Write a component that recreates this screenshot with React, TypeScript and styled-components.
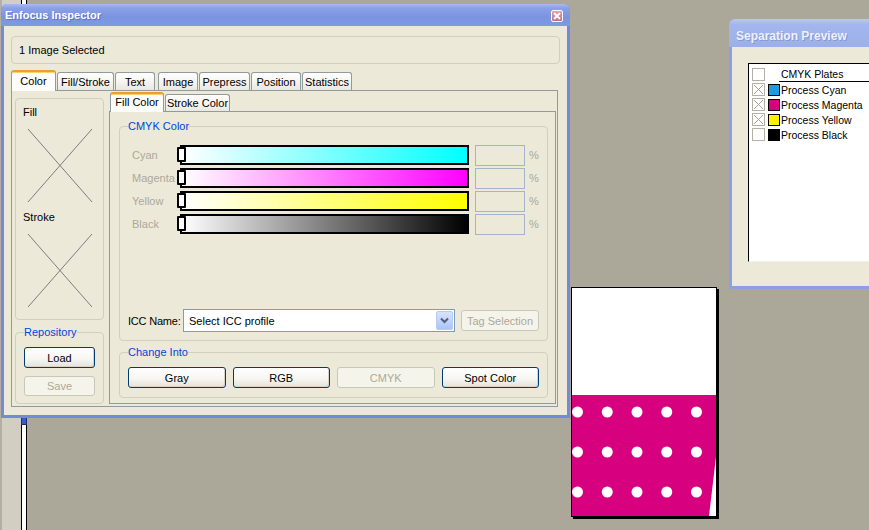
import styled, { createGlobalStyle } from 'styled-components';

const GlobalStyle = createGlobalStyle`
  html, body { margin: 0; padding: 0; }
  body {
    font-family: "Liberation Sans", Arial, sans-serif;
    font-size: 11px;
    color: #000;
  }
  * { box-sizing: border-box; }
`;

const Desktop = styled.div`
  position: relative;
  width: 869px;
  height: 530px;
  overflow: hidden;
  background: #aca899;
  display: flex;
`;

const SideStrip = styled.div`
  width: 21px;
  background: #d2cfc2;
  box-shadow: inset 2px 0 0 #b3b0a3;
`;

const RulerBar = styled.div`
  position: relative;
  width: 6px;
  background: #fff;
  border-left: 1px solid #000;
  border-right: 1px solid #000;

  &::before {
    content: '';
    position: absolute;
    left: -1px;
    right: -1px;
    top: 414px;
    height: 9px;
    background: #3a5cc4;
    border: 1px solid #1b2f70;
  }
`;

const Frame = styled.div<{ $left: number; $top: number; $width: number; $height: number; $inactive?: boolean }>`
  position: absolute;
  left: ${(p) => p.$left}px;
  top: ${(p) => p.$top}px;
  width: ${(p) => p.$width}px;
  height: ${(p) => p.$height}px;
  display: flex;
  flex-direction: column;
  padding: 0 3px 3px;
  border-radius: 6px 6px 0 0;
  background: ${(p) => (p.$inactive ? '#8c9fe4' : '#7489dc')};
`;

const TitleBar = styled.div<{ $inactive?: boolean; $h: number; $size: number }>`
  height: ${(p) => p.$h}px;
  margin: 0 -3px;
  padding: ${(p) => (p.$inactive ? '5px 7px 0 7px' : '0 7px 0 4px')};
  display: flex;
  align-items: center;
  justify-content: space-between;
  border-radius: 6px 6px 0 0;
  font-size: ${(p) => p.$size}px;
  font-weight: bold;
  color: ${(p) => (p.$inactive ? '#eef1fb' : '#fff')};
  text-shadow: 1px 1px 0 ${(p) => (p.$inactive ? '#8596d0' : '#5d72c4')};
  background: ${(p) =>
    p.$inactive
      ? 'linear-gradient(180deg, #b9c7f2 0%, #a3b6ee 20%, #9bb0ea 100%)'
      : 'linear-gradient(180deg, #a9baf0 0%, #8aa1e6 18%, #7b94e0 60%, #7f98e2 100%)'};
`;

const CloseBox = styled.div`
  width: 12px;
  height: 12px;
  margin-top: 1px;
  border: 1px solid #fff;
  border-radius: 2px;
  background: linear-gradient(180deg, #e0a0b2, #c06e88);
  display: flex;
  align-items: center;
  justify-content: center;
`;

const WindowBody = styled.div<{ $pad: string }>`
  flex: 1;
  min-height: 0;
  background: #ece9d8;
  display: flex;
  flex-direction: column;
  padding: ${(p) => p.$pad};
`;

const InfoBox = styled.div`
  height: 28px;
  border: 1px solid #d0d0bf;
  border-radius: 4px;
  padding-left: 7px;
  display: flex;
  align-items: center;
`;

const TabStrip = styled.div<{ $h: number; $top?: number; $left?: number }>`
  position: relative;
  z-index: 1;
  height: ${(p) => p.$h}px;
  margin-top: ${(p) => p.$top ?? 0}px;
  padding-left: ${(p) => p.$left ?? 0}px;
  display: flex;
  align-items: flex-end;
`;

const Tab = styled.div<{ $w: number; $h: number; $active?: boolean; $mr: number }>`
  width: ${(p) => p.$w}px;
  height: ${(p) => (p.$active ? p.$h + 1 : p.$h - 2)}px;
  margin-right: ${(p) => p.$mr}px;
  margin-bottom: ${(p) => (p.$active ? -1 : 0)}px;
  display: flex;
  align-items: center;
  justify-content: center;
  white-space: nowrap;
  border: 1px solid #919b9c;
  border-bottom: none;
  border-radius: 3px 3px 0 0;
  ${(p) =>
    p.$active
      ? `border-top: 2px solid #e99f35;
         box-shadow: inset 0 1px 0 #ffd06a;
         background: #fcfcfb;
         padding-bottom: 2px;`
      : `background: linear-gradient(180deg, #fefefe 0%, #f6f5f1 50%, #e8e7e0 100%);`}
`;

const TabPanel = styled.div`
  flex: 1;
  min-height: 0;
  margin-right: 2px;
  border: 1px solid #919b9c;
  display: flex;
  gap: 5px;
  padding: 0 1px 2px 3px;
`;

const LeftColumn = styled.div`
  width: 89px;
  margin-top: 7px;
  display: flex;
  flex-direction: column;
`;

const PreviewBox = styled.div`
  height: 222px;
  border: 1px solid #d0d0bf;
  border-radius: 4px;
  padding: 7px 0 0 7px;
`;

const PreviewLabel = styled.div<{ $gap?: number }>`
  line-height: 13px;
  margin-top: ${(p) => p.$gap ?? 0}px;
`;

const NoColor = styled.svg`
  display: block;
  margin: 9px 0 0 4px;
`;

const Group = styled.fieldset<{ $pad: string; $grow?: boolean; $h?: number; $mt?: number }>`
  margin: ${(p) => p.$mt ?? 0}px 0 0;
  min-width: 0;
  border: 1px solid #d0d0bf;
  border-radius: 4px;
  padding: ${(p) => p.$pad};
  ${(p) => (p.$grow ? 'flex: 1; min-height: 0;' : '')}
  ${(p) => (p.$h ? `height: ${p.$h}px; flex: none;` : '')}
  display: flex;
  flex-direction: column;
`;

const Legend = styled.legend`
  padding: 0;
  line-height: 13px;
  color: #0046d5;
`;

const Button = styled.button<{ $w?: number; $h?: number; $ml?: number; $mt?: number }>`
  ${(p) => (p.$w ? `width: ${p.$w}px;` : '')}
  height: ${(p) => p.$h ?? 21}px;
  margin: ${(p) => p.$mt ?? 0}px 0 0 ${(p) => p.$ml ?? 0}px;
  padding: 0;
  flex: none;
  font: 11px "Liberation Sans", Arial, sans-serif;
  color: #000;
  border: 1px solid #003c74;
  border-radius: 3px;
  background: linear-gradient(180deg, #ffffff 0%, #f7f6f2 55%, #e6e3da 100%);
  box-shadow: inset -1px -1px 0 #d8d2c6;

  &:disabled {
    color: #aca899;
    border-color: #c9c7ba;
    background: #f5f4ea;
    box-shadow: none;
  }
`;

const RightColumn = styled.div`
  flex: 1;
  margin-top: 1px;
  display: flex;
  flex-direction: column;
`;

const InnerPanel = styled.div`
  flex: 1;
  min-height: 0;
  border: 1px solid #919b9c;
  padding: 8px 7px 5px 9px;
  display: flex;
  flex-direction: column;
`;

const Channels = styled.div`
  display: flex;
  flex-direction: column;
  gap: 3px;
`;

const ChannelRow = styled.div`
  height: 20px;
  margin-left: 4px;
  display: flex;
  align-items: center;
`;

const ChannelName = styled.span`
  width: 48px;
  color: #aca899;
  white-space: nowrap;
`;

const Track = styled.div<{ $to: string }>`
  position: relative;
  flex: 1;
  height: 20px;
  border: 2px solid #000;
  background: linear-gradient(90deg, #ffffff 0%, ${(p) => p.$to} 100%);
`;

const Thumb = styled.div`
  position: absolute;
  left: -5px;
  top: 0;
  width: 9px;
  height: 15px;
  background: #fff;
  border: 2px solid #000;
  border-radius: 1px;
`;

const ValueBox = styled.div`
  width: 50px;
  height: 21px;
  margin-left: 6px;
  border: 1px solid #a7b3c6;
  background: #ece9d8;
`;

const Percent = styled.span`
  width: 10px;
  margin-left: 4px;
  color: #aca899;
`;

const IccRow = styled.div`
  margin-top: auto;
  height: 23px;
  display: flex;
  align-items: center;
`;

const IccLabel = styled.span`
  width: 50px;
  white-space: nowrap;
  letter-spacing: -0.2px;
`;

const Select = styled.div`
  flex: 1;
  height: 23px;
  margin-left: 5px;
  border: 1px solid #7f9db9;
  background: #fff;
  display: flex;
  align-items: center;
  justify-content: space-between;
  padding-left: 5px;
`;

const DropButton = styled.div`
  width: 17px;
  height: 19px;
  margin-right: 1px;
  border: 1px solid #b8cbf5;
  border-radius: 2px;
  background: linear-gradient(180deg, #d7e3fd 0%, #bfd1f9 60%, #adc3f5 100%);
  display: flex;
  align-items: center;
  justify-content: center;
`;

const ConvertGrid = styled.div`
  display: grid;
  grid-template-columns: repeat(4, 1fr);
  column-gap: 7px;
`;

const PlateList = styled.div`
  flex: 1;
  background: #fff;
  border-top: 1px solid #000;
  border-left: 1px solid #000;
  border-bottom: 1px solid #f4f2e8;
  padding-top: 3px;
`;

const PlateRow = styled.div`
  height: 15px;
  padding-left: 3px;
  display: flex;
  align-items: center;
  font-size: 10.5px;
`;

const PlateCheck = styled.div`
  width: 13px;
  height: 13px;
  border: 1px solid #b3b1a5;
  background: #fff;
  display: flex;
  align-items: center;
  justify-content: center;
`;

const PlateSwatch = styled.div<{ $color?: string }>`
  width: 12px;
  height: 12px;
  margin-left: 3px;
  border: ${(p) => (p.$color ? '1px solid #000' : 'none')};
  background: ${(p) => p.$color ?? 'transparent'};
`;

const PlateName = styled.span<{ $header?: boolean }>`
  margin-left: 1px;
  white-space: nowrap;
  ${(p) =>
    p.$header
      ? `flex: 1; margin-left: -1px; padding-left: 2px; border-bottom: 1px solid #000; line-height: 13px;`
      : ''}
`;

const DocPage = styled.svg`
  position: absolute;
  left: 571px;
  top: 287px;
  width: 146px;
  height: 230px;
  display: block;
  border: 1px solid #000;
  box-shadow: 2px 2px 0 #000;
  background: #fff;
`;

const outerTabs = [
  { label: 'Color', w: 45, mr: 1, active: true },
  { label: 'Fill/Stroke', w: 57, mr: 1 },
  { label: 'Text', w: 40, mr: 3 },
  { label: 'Image', w: 40, mr: 1 },
  { label: 'Prepress', w: 51, mr: 1 },
  { label: 'Position', w: 50, mr: 1 },
  { label: 'Statistics', w: 50, mr: 1 },
];

const innerTabs = [
  { label: 'Fill Color', w: 54, mr: 1, active: true },
  { label: 'Stroke Color', w: 65, mr: 1 },
];

const channels = [
  { name: 'Cyan', to: '#00ffff' },
  { name: 'Magenta', to: '#ff00ff' },
  { name: 'Yellow', to: '#ffff00' },
  { name: 'Black', to: '#000000' },
];

const plates = [
  { name: 'Process Cyan', color: '#1b9de2', on: true },
  { name: 'Process Magenta', color: '#d7007e', on: true },
  { name: 'Process Yellow', color: '#fff200', on: true },
  { name: 'Process Black', color: '#000000', on: false },
];

const NoColorMark = () => (
  <NoColor width="66" height="75" viewBox="0 0 66 75">
    <line x1="1" y1="1" x2="65" y2="74" stroke="#7d7d7d" strokeWidth="1" />
    <line x1="65" y1="1" x2="1" y2="74" stroke="#7d7d7d" strokeWidth="1" />
  </NoColor>
);

const CrossMark = () => (
  <svg width="11" height="11" viewBox="0 0 11 11">
    <line x1="1" y1="1" x2="10" y2="10" stroke="#a6a498" strokeWidth="1" />
    <line x1="10" y1="1" x2="1" y2="10" stroke="#a6a498" strokeWidth="1" />
  </svg>
);

const dotsX = [5.5, 35.25, 65, 94.75, 124.5];
const dotsY = [124, 164, 204];

export default function App() {
  return (
    <Desktop>
      <GlobalStyle />
      <SideStrip />
      <RulerBar />

      <Frame $left={1} $top={4} $width={569} $height={414}>
        <TitleBar $h={22} $size={11}>
          <span>Enfocus Inspector</span>
          <CloseBox>
            <svg width="8" height="8" viewBox="0 0 8 8">
              <path d="M1 1 L7 7 M7 1 L1 7" stroke="#fff" strokeWidth="1.8" />
            </svg>
          </CloseBox>
        </TitleBar>
        <WindowBody $pad="10px 7px 8px 7px">
          <InfoBox>1 Image Selected</InfoBox>

          <TabStrip $h={20} $top={6}>
            {outerTabs.map((t) => (
              <Tab key={t.label} $w={t.w} $h={20} $mr={t.mr} $active={t.active}>
                {t.label}
              </Tab>
            ))}
          </TabStrip>

          <TabPanel>
            <LeftColumn>
              <PreviewBox>
                <PreviewLabel>Fill</PreviewLabel>
                <NoColorMark />
                <PreviewLabel $gap={8}>Stroke</PreviewLabel>
                <NoColorMark />
              </PreviewBox>
              <Group $pad="8px 8px 0 8px" $grow $mt={6}>
                <Legend>Repository</Legend>
                <Button>Load</Button>
                <Button disabled $h={20} $mt={8}>
                  Save
                </Button>
              </Group>
            </LeftColumn>

            <RightColumn>
              <TabStrip $h={19} $left={1}>
                {innerTabs.map((t) => (
                  <Tab key={t.label} $w={t.w} $h={19} $mr={t.mr} $active={t.active}>
                    {t.label}
                  </Tab>
                ))}
              </TabStrip>
              <InnerPanel>
                <Group $pad="12px 8px 8px 8px" $grow>
                  <Legend>CMYK Color</Legend>
                  <Channels>
                    {channels.map((c) => (
                      <ChannelRow key={c.name}>
                        <ChannelName>{c.name}</ChannelName>
                        <Track $to={c.to}>
                          <Thumb />
                        </Track>
                        <ValueBox />
                        <Percent>%</Percent>
                      </ChannelRow>
                    ))}
                  </Channels>
                  <IccRow>
                    <IccLabel>ICC Name:</IccLabel>
                    <Select>
                      <span>Select ICC profile</span>
                      <DropButton>
                        <svg width="9" height="7" viewBox="0 0 9 7">
                          <path d="M1 1.5 L4.5 5 L8 1.5" fill="none" stroke="#4d6185" strokeWidth="2" />
                        </svg>
                      </DropButton>
                    </Select>
                    <Button disabled $w={78} $ml={6}>
                      Tag Selection
                    </Button>
                  </IccRow>
                </Group>
                <Group $pad="8px 8px 0 8px" $h={52} $mt={5}>
                  <Legend>Change Into</Legend>
                  <ConvertGrid>
                    <Button>Gray</Button>
                    <Button>RGB</Button>
                    <Button disabled>CMYK</Button>
                    <Button>Spot Color</Button>
                  </ConvertGrid>
                </Group>
              </InnerPanel>
            </RightColumn>
          </TabPanel>
        </WindowBody>
      </Frame>

      <Frame $left={729} $top={19} $width={150} $height={270} $inactive>
        <TitleBar $h={28} $size={12} $inactive>
          <span>Separation Preview</span>
        </TitleBar>
        <WindowBody $pad="16px 0 24px 16px">
          <PlateList>
            <PlateRow>
              <PlateCheck />
              <PlateSwatch />
              <PlateName $header>CMYK Plates</PlateName>
            </PlateRow>
            {plates.map((p) => (
              <PlateRow key={p.name}>
                <PlateCheck>{p.on && <CrossMark />}</PlateCheck>
                <PlateSwatch $color={p.color} />
                <PlateName>{p.name}</PlateName>
              </PlateRow>
            ))}
          </PlateList>
        </WindowBody>
      </Frame>

      <DocPage viewBox="0 0 144 228" preserveAspectRatio="none">
        <rect x="0" y="107" width="144" height="121" fill="#d7007e" />
        {dotsY.map((y) =>
          dotsX.map((x) => <circle key={`${x}-${y}`} cx={x} cy={y} r="5.5" fill="#fff" />)
        )}
        <polygon points="144,169 137,228 144,228" fill="#fff" />
      </DocPage>
    </Desktop>
  );
}
